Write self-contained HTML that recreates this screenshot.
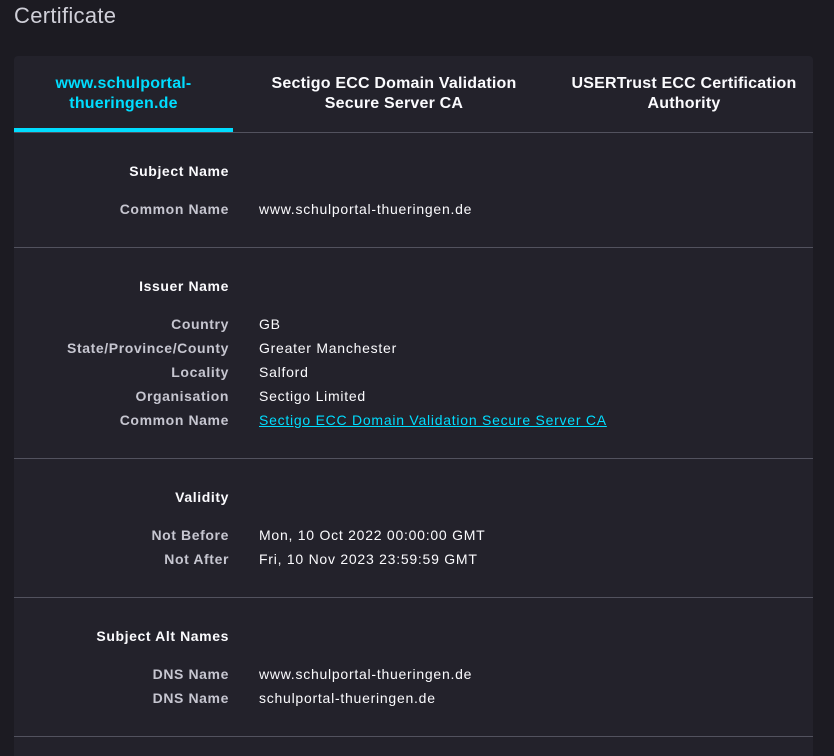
<!DOCTYPE html>
<html><head><style>
body{margin:0;background:#1c1b22;width:834px;height:756px;overflow:hidden;font-family:"Liberation Sans","DejaVu Sans",sans-serif;color:#fbfbfe;position:relative}
h1{position:absolute;left:14px;top:3px;margin:0;font-weight:300;font-size:22px;color:#cfcfd8;letter-spacing:0.3px}
.card{position:absolute;left:14px;top:56px;width:799px;height:700px;background:#23222b;border-radius:4px 4px 0 0;overflow:hidden}
.tabs{height:76px;border-bottom:1px solid #52525e;position:relative}
.tab{position:absolute;top:18px;text-align:center;font-weight:bold;font-size:16px;line-height:20px;letter-spacing:0.2px}
.t1{left:0;width:219px;color:#00ddff}
.t1u{position:absolute;left:0;top:72px;width:219px;height:4px;background:#00ddff}
.sec{position:absolute;left:0;width:799px;border-bottom:1px solid #52525e}
.row{position:absolute;left:0;width:799px;font-size:14px;height:24px;line-height:24px;letter-spacing:0.75px}
.l{position:absolute;right:584px;white-space:nowrap;font-weight:bold;color:#c6c6d0;letter-spacing:0.6px}
.h{color:#fbfbfe}
.v{position:absolute;left:245px;white-space:nowrap}
a{color:#00ddff;text-decoration:underline}
</style></head><body>
<h1>Certificate</h1>
<div class="card">
<div class="tabs">
<div class="tab t1">www.schulportal-<br>thueringen.de</div><div class="t1u"></div>
<div class="tab" style="left:240px;width:280px">Sectigo ECC Domain Validation<br>Secure Server CA</div>
<div class="tab" style="left:540px;width:260px">USERTrust ECC Certification<br>Authority</div>
</div>
<div class="sec" style="top:76px;height:115px"></div>
<div class="sec" style="top:192px;height:210px"></div>
<div class="sec" style="top:403px;height:138px"></div>
<div class="sec" style="top:542px;height:138px"></div>
<div class="row" style="top:103px"><span class="l h">Subject Name</span></div>
<div class="row" style="top:141px"><span class="l">Common Name</span><span class="v">www.schulportal-thueringen.de</span></div>
<div class="row" style="top:218px"><span class="l h">Issuer Name</span></div>
<div class="row" style="top:256px"><span class="l">Country</span><span class="v">GB</span></div>
<div class="row" style="top:280px"><span class="l">State/Province/County</span><span class="v">Greater Manchester</span></div>
<div class="row" style="top:304px"><span class="l">Locality</span><span class="v">Salford</span></div>
<div class="row" style="top:328px"><span class="l">Organisation</span><span class="v">Sectigo Limited</span></div>
<div class="row" style="top:352px"><span class="l">Common Name</span><span class="v"><a>Sectigo ECC Domain Validation Secure Server CA</a></span></div>
<div class="row" style="top:429px"><span class="l h">Validity</span></div>
<div class="row" style="top:467px"><span class="l">Not Before</span><span class="v">Mon, 10 Oct 2022 00:00:00 GMT</span></div>
<div class="row" style="top:491px"><span class="l">Not After</span><span class="v">Fri, 10 Nov 2023 23:59:59 GMT</span></div>
<div class="row" style="top:568px"><span class="l h">Subject Alt Names</span></div>
<div class="row" style="top:606px"><span class="l">DNS Name</span><span class="v">www.schulportal-thueringen.de</span></div>
<div class="row" style="top:630px"><span class="l">DNS Name</span><span class="v">schulportal-thueringen.de</span></div>
</div>
</body></html>
